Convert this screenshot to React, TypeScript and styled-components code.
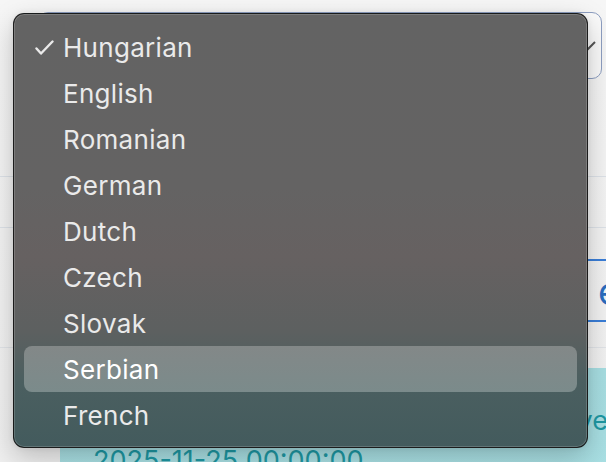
import React from "react";
import styled, { createGlobalStyle } from "styled-components";

const GlobalStyle = createGlobalStyle`
  html, body {
    margin: 0;
    padding: 0;
    overflow: hidden;
  }
  body {
    background: #f3f3f3;
    font-family: Inter, "Liberation Sans", sans-serif;
    -webkit-font-smoothing: antialiased;
  }
`;

const Page = styled.div`
  position: relative;
  width: 700px;
  height: 462px;
  padding-top: 12px;
  box-sizing: border-box;
  background: linear-gradient(180deg, #f6f6f6 0%, #f0f0f0 100%);
`;

const SelectField = styled.div`
  margin-left: 38px;
  width: 564px;
  height: 67px;
  box-sizing: border-box;
  border: 1.5px solid #8d9ec1;
  border-radius: 10px;
  background: #fafafa;
  display: flex;
  align-items: center;
  justify-content: flex-end;
  padding-right: 5px;
`;

const FormRow = styled.div<{ $h: number }>`
  height: ${(p) => p.$h}px;
  box-sizing: border-box;
  border-bottom: 1px solid #dde2e8;
`;

const ActionRow = styled.div`
  margin-top: 31px;
  display: flex;
  height: 63px;
`;

const Filler = styled.div`
  flex: none;
  width: 560px;
`;

const OutlineButton = styled.div`
  flex: none;
  width: 160px;
  box-sizing: border-box;
  border: 2px solid #3a7ed8;
  border-radius: 8px;
  padding-left: 36px;
  display: flex;
  align-items: center;
  color: #2a6cbf;
  font-size: 38px;
  white-space: nowrap;
  overflow: hidden;
`;

const Divider = styled.div`
  margin-top: 25px;
  height: 1px;
  background: #e1e4e8;
`;

const InfoBox = styled.div`
  margin: 20px 0 0 60px;
  width: 620px;
  height: 120px;
  box-sizing: border-box;
  padding: 33px 0 0 33px;
  background: linear-gradient(180deg, #a7dee2 0%, #a9e0e4 100%);
  color: #1e98a3;
  font-size: 27px;
  line-height: 40px;
`;

const InfoLine = styled.div<{ $right?: boolean }>`
  white-space: nowrap;
  text-align: ${(p) => (p.$right ? "right" : "left")};
  padding-right: ${(p) => (p.$right ? "72px" : "0")};
`;

const Menu = styled.div`
  position: absolute;
  left: 13px;
  top: 13px;
  width: 575px;
  height: 435px;
  box-sizing: border-box;
  padding: 10px;
  border: 1px solid rgba(20, 20, 20, 0.9);
  border-radius: 11px;
  box-shadow: inset 0 0 0 1px rgba(255, 255, 255, 0.16),
    0 10px 28px rgba(0, 0, 0, 0.22), 0 0 6px rgba(0, 0, 0, 0.08);
  background: linear-gradient(
    180deg,
    #636363 0%,
    #646363 40%,
    #666161 56%,
    #5d6060 73%,
    #4b5f60 85%,
    #435b5d 100%
  );
  display: flex;
  flex-direction: column;
`;

const Item = styled.div<{ $active?: boolean }>`
  position: relative;
  height: 46px;
  flex: none;
  display: flex;
  align-items: center;
  padding-left: 39px;
  border-radius: 8px;
  font-size: 26px;
  letter-spacing: 0.3px;
  color: ${(p) => (p.$active ? "#ffffff" : "#eaeaea")};
  background: ${(p) =>
    p.$active ? "linear-gradient(180deg, #838888 0%, #7b8b8b 100%)" : "transparent"};
`;

const Check = styled.svg`
  position: absolute;
  left: 11px;
  top: 16px;
`;

const languages = [
  "Hungarian",
  "English",
  "Romanian",
  "German",
  "Dutch",
  "Czech",
  "Slovak",
  "Serbian",
  "French",
];

export default function App() {
  return (
    <>
      <GlobalStyle />
      <Page>
        <SelectField>
          <svg width="16" height="10" viewBox="0 0 16 10">
            <path d="M1 1 L8 8 L15 1" fill="none" stroke="#555" strokeWidth="2" />
          </svg>
        </SelectField>
        <FormRow $h={98} />
        <FormRow $h={51} />
        <ActionRow>
          <Filler />
          <OutlineButton>előnézet</OutlineButton>
        </ActionRow>
        <Divider />
        <InfoBox>
          <InfoLine $right>Utolsó módosítás mentve</InfoLine>
          <InfoLine>2025-11-25 00:00:00</InfoLine>
        </InfoBox>
        <Menu>
          {languages.map((lang, i) => (
            <Item key={lang} $active={lang === "Serbian"}>
              {i === 0 && (
                <Check width="19" height="15" viewBox="0 0 19 15">
                  <path
                    d="M1.5 8.5 L6 13.5 L17.5 1.5"
                    fill="none"
                    stroke="#eaeaea"
                    strokeWidth="2.4"
                    strokeLinecap="round"
                    strokeLinejoin="round"
                  />
                </Check>
              )}
              {lang}
            </Item>
          ))}
        </Menu>
      </Page>
    </>
  );
}
